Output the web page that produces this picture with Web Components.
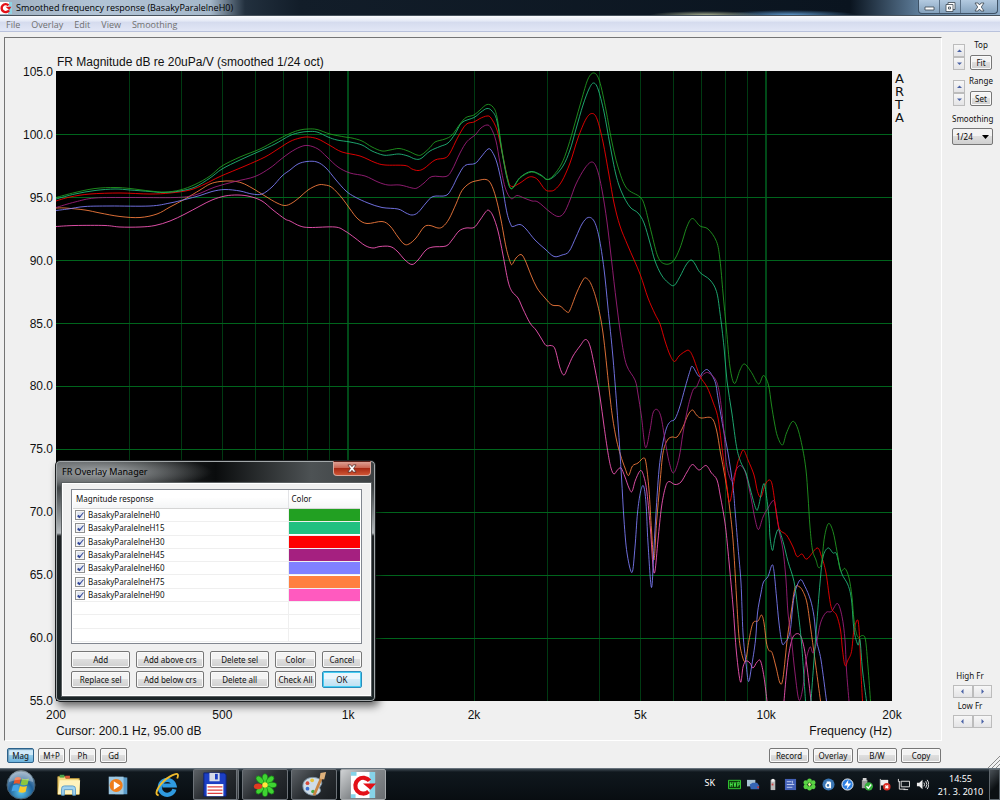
<!DOCTYPE html>
<html lang="en">
<head>
<meta charset="utf-8">
<title>Smoothed frequency response</title>
<style>
    html, body { height: 100%; margin: 0; }
    body {
        display: flex;
        flex-direction: column;
        font: 8px/12px "Noto Sans", "Open Sans", sans-serif;
        color: #111;
        background: #f0f0f0;
    }
    arta-window { flex: 1; min-height: 0; }
</style>
</head>
<body>

<arta-window caption="Smoothed frequency response (BasakyParalelneH0)">
    <fr-chart slot="chart"></fr-chart>
    <side-panel slot="side"></side-panel>
    <push-button slot="modes" pressed>Mag</push-button>
    <push-button slot="modes">M+P</push-button>
    <push-button slot="modes">Ph</push-button>
    <push-button slot="modes">Gd</push-button>
    <push-button slot="actions">Record</push-button>
    <push-button slot="actions">Overlay</push-button>
    <push-button slot="actions">B/W</push-button>
    <push-button slot="actions">Copy</push-button>
</arta-window>
<overlay-manager></overlay-manager>
<task-bar></task-bar>

<script>
// name, colour and curve of every overlay; points are "x,y" in plot units
// (56..892 is 200 Hz..20 kHz on a log scale, 71..701 is 105..55 dB)
const TRACES = [
    { name: 'BasakyParalelneH90', color: '#ff5abf', points: '56,226.5 75,225.5 105,225.5 120,227 140,227 155,225.5 170,221 185,214 200,206 212,200 225,196 238,195 250,196.5 262,201 273,210 285,219 290,221 300,226 310,227.5 335,227 345,231 355,238 365,245.5 373,248 380,246.5 390,246.5 397,251 405,260 412,264.5 418,260 426,250 433,247 446,246 452,240 459,231 466,228 474,227.5 480,220 486,211.5 489,210.5 493,216 498,231 503,255 508,281 512,291.5 518,298 523,309 530,323 536,330 541,338 546,345.5 551,345.5 555,349 560,368 564,375 568,367 573,356 580,346 585.5,339.5 590,346 595,369 600,397 604,426 608,453 611,468 614,474 617.5,470 621,468 625,477 629,488 632,491.5 635.5,480 640.5,470.5 644,477 647,493 650.5,530 653,566 655,571 658,540 661.5,507 665.5,487 669,481.5 675,484.5 681,482 687,472 692.5,464.5 699,470 706,465.5 711.5,473 717,480 720.5,497 725,523 728,551 733,606 736.5,653 740.5,682 743,667 746,661 750,663 753,668 757,662 760.5,661 764,677 767,701 M 784,701 786.5,673 789,653 793,637 799,634 803,643 806.5,663 811,701' },
    { name: 'BasakyParalelneH75', color: '#ff8040', points: '56,208 65,208 85,210 100,213 120,216.5 140,217.5 157,214 170,207 185,199 200,190 210,184 220,181.5 232,181 242,183 252,188 265,196 277,203 285,205.5 292,203 300,197 308,190 318,185 325,185 332,187.5 342,198 350,209 358,219 367,223.5 382,221.5 390,226 398,237 404,244 409,244 416,238 424,227 430,225.5 438,228 443,226.5 449,219 456,204 462,190.5 470,183 478,180.5 486,179.5 491,184 496,198 501,220 506,247 510,261.5 512,264.5 516,258 521,254.5 525,260 531,275 537,288 545,298 552,305 560,306 567,312 570,310 577,292 583,280 586,278 591,284 597,302 603,333 609,388 612.5,417 616.5,440 620.5,455 625,468 628.5,475.5 632.5,466 638,463 643.5,458 646,463 649,490 651.5,530 654,560 656.5,523 660,483 663,453 667.5,440 672,437 677,437 682.5,428 688,415 692.5,410 696.5,415 701,418 711.5,418 716.5,430 720.5,453 725,477 729,503 733,540 736.5,597 739,637 742,655 745.5,661 749,640 753,623 758,621 761.5,615 764,623 766.5,643 769,650.5 772,652.5 776,667 780,683 783,678 787.5,637 791.5,610 795,588 799,586.5 803,591.5 807,603 810.5,627 815,660 820.5,701' },
    { name: 'BasakyParalelneH60', color: '#8080ff', points: '56,210.5 68,209 85,206.5 110,206 150,206 170,203 185,199.5 200,195.5 212,191.5 225,189.5 240,191 252,194 262,194 272,187 282,176 290,170 298,164 307,161.5 317,162 326,168 336,180 346,191 355,197 368,203 382,207.5 398,209 406,213 412,215 418,212.5 426,203 433,196.5 446,195.5 452,188 458,176 465,165.5 475,163.5 481,157 488,149 492,151.5 497,163 502,185 507,213 511,225 513,226.5 520,224.5 526,229 535,240 545,249 554,256.5 562,255 569,251.5 576,237 582,224 588,217.5 594,221 599,237 604,269 608,308 613,358 618,423 621.5,477 624,520 627,553 632,572.5 635,547 637.5,513 640.5,492 643.5,486 646,503 648,543 651.5,587.5 654,547 656,513 659,470 662.5,445 666.5,428 670.5,421.5 675,419 680,406 685,388 690,371 692.5,366.5 699,376.5 703,372 708,370 715,381.5 718,398 723,427 728,453 733,487 735,510 738,547 741,583 743,633 746,663 748.5,681.5 751.5,667 755.5,640 757.5,613 761,593 763.5,582 768,576.5 772,565 774,571.5 776.5,597 779,623 782,643 785,642.5 790,632 794,597 800,580 805,586.5 810.5,600 814,616.5 816.5,640 821,660 826.5,701' },
    { name: 'BasakyParalelneH45', color: '#a52080', points: '56,207.5 75,202 95,198 130,197.5 175,197.5 195,195 215,187 235,181.5 255,176.5 270,168 280,160 290,152.5 300,147 308,145.5 318,149 327,157 338,167 350,173 365,176 378,182 388,185 400,185 412,188 417,188 424,183 432,176.5 446,176.5 452,170 460,153 467,141.5 475,135 481,128 487,125 491,128 496,141 500,163 505,187 511,198.5 517,195.5 524,198 532,201 538,202 550,212 558,216.5 564,213 570,200 576,184 585,168 592,162 597,169 602,190 607,222 611.5,260 616.5,303 621.5,340 626.5,365 635,380 638,394 641.5,417 645.5,447.5 650,430 653,413 657,409.5 661,417 665,440 669,461.5 673.5,473 679,458 683,433 688,407 693,390 696.5,387 701,377 706.5,372.5 711.5,375 716.5,381.5 720,397 724,432 726,460 729,475 732.5,481 736,470 740.5,465.5 745,471.5 748,483 751.5,500 755,519 758.5,529.5 763,517 768,508 773.5,500.5 776,510 779,530 783,550 786,580 788,613 791.5,640 795,673 799,700 803,687 805.5,663 810,647 813,653 816.5,643 820.5,623 826,612.5 831.5,611.5 837.5,603.5 842,616.5 845,640 846.5,670 849,701' },
    { name: 'BasakyParalelneH30', color: '#ff0000', points: '56,201 70,197 90,194 120,193 150,194 170,193 190,190 205,184 220,176.5 245,166 265,157 278,149 290,141.5 300,138 308,137 318,139 330,145.5 342,152 360,156 375,162.5 385,165 405,165.5 412,169 418,170.5 424,168.5 435,160 445,158 450,153 458,137 466,124.5 474,122 480,118.5 487,116 491,118 497,130 502,152 508,180 512,186.5 520,183 528,177.5 533,177 538,180 545,189.5 550,191 555,189.5 562,181 570,163 578,138 586,119 592,113.5 597,119 603,142 609,175 614,203 620,226 628,246 640,274 648,298 655,314 660,324 665,341 670,355 674.5,361.5 679,356 685,351.5 689,350.5 693,357 700,376 707,387 713,402 718,418 722,448 726.5,483 729.5,502 733,487 737,465 740,456.5 743.5,450 748,460 754,475 757.5,491.5 761,497 765,485 769,480 772,484 775,503 777,518 780,530 786.5,535 793,547 797,556.5 802,554 807,559 817,548 821.5,556.5 826,573 831,606.5 836.5,615 840.5,630 842.5,650 845,665.5 848,660 851.5,651.5 854,630 858,620.5 860,647 861,673 862.5,701' },
    { name: 'BasakyParalelneH15', color: '#22c080', points: '56,199 75,194 95,190.5 115,189 130,190 150,191.5 163,192.5 180,191 195,187 210,178 222,169 240,160 260,151 275,144 290,135.5 300,132.5 308,131.5 317,132 328,137 337,140 350,142 362,145 372,151 383,155 390,155 399,154 408,156 415,159 421,158.5 430,151 440,146.5 448,143 455,134 462,122.5 474,117.5 481,112 487,108.5 492,111 497,121 502,152 507,178 511.5,188.5 520,177.5 531,171.5 541,175 547,179.5 554,176.5 563,166 570,150 576,129 583,105 589,89 593.5,83 598,89 604,112 610,145 616,175 622,193 630,207 638,213 644,223 650,243 655,261 661.5,275 668,282.5 674,285.5 680,276.5 686,265 691,260 695,264 700,272.5 710,280 716.5,291.5 720,313 724,347 727,381 732,414 736.5,446.5 740.5,461.5 746,473 750.5,490 756,509 758.5,506.5 763.5,484 766,493 769,518 770,537 772.5,550.5 775,538 778.5,529.5 783,541.5 788,561.5 794,581.5 797.5,607 801.5,643 805.5,701 M 811,701 814,660 816.5,627 820,583 823,557 828,548 833,553 836.5,554 841.5,573 848,585 851.5,600 854,630 858,645 860,640 862.5,670 866.5,701' },
    { name: 'BasakyParalelneH0', color: '#22a022', points: '56,197.5 75,192.5 95,188.5 115,187.5 130,188.5 150,191 165,192 180,190 195,184.5 210,176 222,166 240,157 260,149 275,141 290,133.5 300,130 308,129 317,129.5 330,134 345,137 352,138 362,141 372,147 382,151 390,150 399,148.5 408,151 417,155 422,154.5 430,147.5 435,142 445,139 452,135 460,124 466,117.5 474,115 480,110 487,104.5 493,107 497,117 502,150 507,176 511.5,189 520,178 531.5,172 541.5,176 547,179.5 553,176 561.5,164 568,147 575,123 581.5,100 588,79 594,73 599.5,81 606,110 611.5,140 618,167 626.5,188 640,197 645,207 651.5,233 658,257 665,264 673,261.5 680,248 687,226.5 692.5,218.5 700,226 708,229 716.5,241.5 720,260 723,293 726.5,330 730,367 734.5,383.5 740,370 744.5,364 751.5,372.5 758.5,384 763.5,375.5 768.5,385 771.5,405 774.5,423 777.5,436.5 782.5,445 786.5,433 792.5,421.5 797.5,428 802.5,448 806,470 808,496 810,527 812.5,550 816,560 818.5,567.5 821.5,563 824.5,537 828.5,523.5 833,531.5 837,551.5 840.5,570.5 845,568.5 849,578 852,597 854,620 857.5,636.5 862.5,635.5 865.5,640 868,667 870.5,701' }
];

const PLOT = { left: 56, top: 71, width: 836, height: 630 };

class BaseElement extends HTMLElement {
    constructor() {
        super();
        this.attachShadow({ mode: 'open' });
    }

    connectedCallback() {
        this.render();
    }
}

class PushButton extends BaseElement {
    render() {
        this.shadowRoot.innerHTML = `
        <style>
            :host { display: block; }
            button {
                display: block;
                box-sizing: border-box;
                width: 100%;
                height: var(--button-height, 15px);
                padding: 0;
                border: 1px solid #777;
                border-radius: 2px;
                box-shadow: inset 0 0 0 1px #fafafa;
                background: linear-gradient(#f3f3f3 45%, #dedede 50%, #d0d0d0);
                font: inherit;
                color: inherit;
                white-space: nowrap;
            }
            :host([pressed]) button {
                border-color: #2c628b;
                box-shadow: inset 1px 1px 1px #6f9cb8;
                background: linear-gradient(#d0eafa 45%, #93cbea 50%, #6cb3dd);
            }
            :host([primary]) button {
                border-color: #2a8dbd;
                box-shadow: inset 0 0 0 1px #46cdf2;
                background: linear-gradient(#eaf6fd 45%, #d3ebf8 50%, #bde0f2);
            }
        </style>
        <button type="button"><slot></slot></button>
        `;
    }
}

// pair of arrow buttons, stacked or side by side (dir="row")
class SpinButtons extends BaseElement {
    render() {
        const row = this.getAttribute('dir') === 'row';
        const name = this.getAttribute('name') || '';
        const arrows = row ? ['M5.500 2L3 4.500 5.500 7z', 'M3.500 2L6 4.500 3.500 7z'] : ['M2 6L4.500 3.500 7 6z', 'M2 3.500L4.500 6 7 3.500z'];
        this.shadowRoot.innerHTML = `
        <style>
            :host { display: flex; flex-direction: ${row ? 'row' : 'column'}; }
            button {
                ${row ? 'flex: 1;' : 'flex: none;'}
                display: flex;
                align-items: center;
                justify-content: center;
                box-sizing: border-box;
                min-width: 12px;
                height: 13px;
                padding: 0;
                border: 1px solid #bcbcbc;
                background: linear-gradient(#f7f7f7, #e4e4e6);
            }
            svg { width: 9px; height: 9px; fill: #4a62a6; }
        </style>
        <button type="button" aria-label="${name} ${row ? 'left' : 'up'}"><svg viewBox="0 0 9 9"><path d="${arrows[0]}"/></svg></button>
        <button type="button" aria-label="${name} ${row ? 'right' : 'down'}"><svg viewBox="0 0 9 9"><path d="${arrows[1]}"/></svg></button>
        `;
    }
}

class ArtaWindow extends BaseElement {
    render() {
        const menu = ['File', 'Overlay', 'Edit', 'View', 'Smoothing'];
        this.shadowRoot.innerHTML = `
        <style>
            :host { display: flex; flex-direction: column; }
            header {
                display: flex;
                align-items: center;
                height: 16px;
                box-sizing: border-box;
                border-bottom: 1px solid #47525c;
                background:
                    radial-gradient(ellipse 56px 4px at 706px 15px, #a3ab8c, transparent),
                    radial-gradient(ellipse 66px 5px at 790px 15px, #5d97cb, transparent),
                    linear-gradient(90deg, #9fb0c0 0, #b2c4d6 100px, #a5b8ca 210px, #22303e 245px, #121d29 300px, #0a141f 85%, #5f7e9b 92%, #8eacc8);
            }
            .logo { width: 12px; height: 12px; }
            h1 {
                flex: 1;
                margin: 0 0 0 4px;
                font: 9px/15px "Open Sans", "Noto Sans", sans-serif;
                color: #000;
            }
            .controls {
                display: flex;
                align-self: flex-start;
                margin-right: 2px;
                border: 1px solid #3e5266;
                border-top: 0;
                border-radius: 0 0 4px 4px;
                background: linear-gradient(#b3cae0, #86a3be);
            }
            .controls button {
                display: flex;
                align-items: center;
                justify-content: center;
                width: 21px;
                height: 13px;
                padding: 0;
                border: 0;
                border-right: 1px solid #5a7086;
                background: none;
            }
            .controls button:last-child { width: 36px; border-right: 0; }
            .controls svg { width: 11px; height: 10px; }
            nav {
                display: flex;
                gap: 11px;
                height: 15px;
                padding-left: 6px;
                border-bottom: 1px solid #b9c2dc;
                background: linear-gradient(#fbfcfe, #e3e8f5 35%, #d5dbee 40%, #e2e7f6);
            }
            nav button {
                padding: 0;
                border: 0;
                background: none;
                font: 9px/17px "Open Sans", "Noto Sans", sans-serif;
                color: #707070;
            }
            main { flex: 1; display: flex; min-height: 0; padding: 5px 0 0 4px; }
            .left { flex: 1; display: flex; flex-direction: column; min-width: 0; }
            .frame {
                flex: 1;
                display: flex;
                min-height: 0;
                border: 1px solid;
                border-color: #747474 #fff #fff #747474;
            }
            ::slotted([slot="chart"]) { flex: 1; }
            ::slotted([slot="side"]) { width: 58px; }
            footer {
                display: flex;
                gap: 4px;
                padding: 7px 1px 5px 3px;
            }
            footer .gap { flex: 1; }
            ::slotted([slot="modes"]) { width: 27px; }
            ::slotted([slot="actions"]) { width: 40px; }
        </style>
        <header>
            <svg class="logo" viewBox="0 0 12 12"><path fill="#fff" d="M0 0h12v12H0z"/><path fill="#8ed3e4" d="M9 0h3v12H8z"/><path fill="none" stroke="#e31017" stroke-width="2.400" d="M8.500 3.300A4 4 0 1 0 9 8.300"/><path fill="#e31017" d="M5.500 4.800h6L9.200 8z"/></svg>
            <h1>${this.getAttribute('caption')}</h1>
            <div class="controls">
                <button type="button" aria-label="Minimize"><svg viewBox="0 0 11 10"><path fill="#fff" stroke="#3b4650" stroke-width=".8" d="M1 5h9v3H1z"/></svg></button>
                <button type="button" aria-label="Restore"><svg viewBox="0 0 11 10"><path fill="#fff" stroke="#3b4650" stroke-width=".8" d="M3 .5h7v7H3z"/><path fill="#fff" fill-rule="evenodd" stroke="#3b4650" stroke-width=".8" d="M1 2.500h7v7H1zM3.500 5v2h2V5z"/></svg></button>
                <button type="button" aria-label="Close"><svg viewBox="0 0 11 10"><path fill="#fff" stroke="#3b4650" stroke-width=".8" d="M1 1h3l1.500 2L7 1h3L7.300 5 10 9H7L5.500 7 4 9H1l2.700-4z"/></svg></button>
            </div>
        </header>
        <nav>${menu.map(m => `<button type="button">${m}</button>`).join('')}</nav>
        <main>
            <div class="left">
                <div class="frame"><slot name="chart"></slot></div>
                <footer>
                    <slot name="modes"></slot>
                    <span class="gap"></span>
                    <slot name="actions"></slot>
                </footer>
            </div>
            <slot name="side"></slot>
        </main>
        `;
    }
}

class FrChart extends BaseElement {
    xFor(freq) {
        return PLOT.left + PLOT.width * Math.log10(freq / 200) / 2;
    }

    gridLines() {
        const right = PLOT.left + PLOT.width;
        const bottom = PLOT.top + PLOT.height;
        let out = '';
        for (const decade of [100, 1000, 10000]) {
            for (let i = 1; i < 10; i++) {
                const f = decade * i;
                if (f <= 200 || f >= 20000) continue;
                const x = Math.floor(this.xFor(f)) + (i === 1 ? 0 : 0.5);
                out += `<path class="${i === 1 ? 'decade' : 'minor'}" d="M${x} ${PLOT.top}V${bottom}"/>`;
            }
        }
        for (let db = 100; db > 55; db -= 5) {
            const y = PLOT.top + (105 - db) * 12.6 + 0.5;
            out += `<path class="level" d="M${PLOT.left} ${y}H${right}"/>`;
        }
        return out;
    }

    // Catmull-Rom spline through the points, written as cubic Beziers
    splinePath(str) {
        return str.split(' M ').map(part => {
            const p = part.split(' ').map(s => s.split(',').map(Number));
            let d = `M${p[0]}`;
            for (let i = 0; i < p.length - 1; i++) {
                const a = p[i - 1] || p[i];
                const b = p[i];
                const c = p[i + 1];
                const e = p[i + 2] || c;
                d += `C${b[0] + (c[0] - a[0]) / 6} ${b[1] + (c[1] - a[1]) / 6} ${c[0] - (e[0] - b[0]) / 6} ${c[1] - (e[1] - b[1]) / 6} ${c[0]} ${c[1]}`;
            }
            return d;
        }).join('');
    }

    render() {
        const levels = [];
        for (let db = 105; db >= 55; db -= 5) levels.push(db.toFixed(1));
        const ticks = [['200', 0.398], ['500', 0.301], ['1k', 0.301], ['2k', 0.398], ['5k', 0.301], ['10k', 0.301], ['20k', 0]];
        this.shadowRoot.innerHTML = `
        <style>
            :host {
                display: grid;
                grid-template: 33px minmax(0, 1fr) 21px 18px / 51px minmax(0, 1fr) 49px;
                font: 12px/14px "Liberation Sans", Arial, sans-serif;
                color: #111;
            }
            h2 {
                grid-area: 1 / 2;
                align-self: end;
                margin: 0 0 2px 1px;
                font-size: 12px;
                font-weight: 400;
                line-height: 14px;
            }
            .levels {
                grid-area: 2 / 1;
                display: flex;
                flex-direction: column;
                justify-content: space-between;
                margin: -6px 3px -7px 0;
                text-align: right;
            }
            svg { grid-area: 2 / 2; width: 100%; height: 100%; background: #000; }
            svg path { fill: none; vector-effect: non-scaling-stroke; }
            .minor { stroke: #003a12; }
            .decade { stroke: #004a18; stroke-width: 2; }
            .level { stroke: #00641c; }
            .brand {
                grid-area: 2 / 3;
                width: 10px;
                margin: 1px 0 0 3px;
                font: 13px/13px "DejaVu Sans", sans-serif;
                word-break: break-all;
            }
            .ticks { grid-area: 3 / 2; display: flex; align-items: center; margin-top: 6px; }
            .ticks span { width: 0; display: flex; justify-content: center; }
            .ticks i { height: 1px; flex-basis: 0; }
            .foot {
                grid-area: 4 / 2;
                display: flex;
                justify-content: space-between;
                padding-top: 2px;
            }
        </style>
        <h2>FR Magnitude dB re 20uPa/V (smoothed 1/24 oct)</h2>
        <div class="levels">${levels.map(l => `<span>${l}</span>`).join('')}</div>
        <svg viewBox="${PLOT.left} ${PLOT.top} ${PLOT.width} ${PLOT.height}" preserveAspectRatio="none" role="img" aria-label="Frequency response">
            ${this.gridLines()}
            ${TRACES.map(t => `<path stroke="${t.color}" stroke-opacity=".85" d="${this.splinePath(t.points)}"/>`).join('')}
        </svg>
        <div class="brand">ARTA</div>
        <div class="ticks">${ticks.map(([t, w]) => `<span>${t}</span>${w ? `<i style="flex-grow:${w * 1000}"></i>` : ''}`).join('')}</div>
        <div class="foot"><span>Cursor: 200.1 Hz, 95.00 dB</span><span>Frequency (Hz)</span></div>
        `;
    }
}

class SidePanel extends BaseElement {
    render() {
        this.shadowRoot.innerHTML = `
        <style>
            :host {
                display: flex;
                flex-direction: column;
                box-sizing: border-box;
                padding-top: 7px;
                font-size: 8px;
                line-height: 12px;
            }
            .set {
                display: grid;
                grid-template-columns: 12px 22px;
                align-items: start;
                column-gap: 5px;
                margin: 0 0 10px 11px;
            }
            .set div { display: flex; flex-direction: column; align-items: center; gap: 4px; margin-top: -5px; }
            .set span { white-space: nowrap; }
            .set push-button { width: 22px; }
            .smooth { display: flex; flex-direction: column; gap: 3px; margin: -3px 0 0 10px; }
            .pick { display: grid; width: 41px; }
            .pick > * { grid-area: 1 / 1; }
            .pick svg { width: 7px; height: 4px; place-self: center end; margin-right: 4px; pointer-events: none; }
            select {
                appearance: none;
                box-sizing: border-box;
                height: 17px;
                padding: 0 0 0 3px;
                border: 1px solid #777;
                border-radius: 2px;
                background: linear-gradient(#f3f3f3 45%, #dedede 50%, #d0d0d0);
                font: inherit;
                color: #000;
            }
            .space { flex: 1; }
            .freq { display: flex; flex-direction: column; gap: 3px; margin: 0 8px 2px 11px; text-align: center; }
            .freq span { margin-right: 5px; }
            .grip { align-self: flex-end; width: 12px; height: 12px; margin-top: 26px; }
        </style>
        <div class="set"><spin-buttons name="Top"></spin-buttons><div><span>Top</span><push-button>Fit</push-button></div></div>
        <div class="set"><spin-buttons name="Range"></spin-buttons><div><span>Range</span><push-button>Set</push-button></div></div>
        <div class="smooth">
            <label for="oct">Smoothing</label>
            <div class="pick">
                <select id="oct"><option>1/24</option></select>
                <svg viewBox="0 0 7 4"><path d="M0 0h7L3.500 4z"/></svg>
            </div>
        </div>
        <span class="space"></span>
        <div class="freq"><span>High Fr</span><spin-buttons dir="row" name="High Fr"></spin-buttons></div>
        <div class="freq"><span>Low Fr</span><spin-buttons dir="row" name="Low Fr"></spin-buttons></div>
        <svg class="grip" viewBox="0 0 12 12"><path stroke="#8a8a8a" d="M0 12L12 0M4 12l8-8M8 12l4-4"/></svg>
        `;
    }
}

class OverlayManager extends BaseElement {
    render() {
        const rows = [...TRACES].reverse().map((t, i) => `
            <tr>
                <td><label><input type="checkbox" id="t${i}" checked>${t.name}</label></td>
                <td><b style="background:${t.color}"></b></td>
            </tr>`).join('');
        this.shadowRoot.innerHTML = `
        <style>
            :host {
                position: absolute;
                left: 55px;
                top: 460px;
                box-sizing: border-box;
                width: 321px;
                padding: 0 4px 5px 6px;
                border: 1px solid #1b1e20;
                border-radius: 5px;
                box-shadow: inset 0 0 0 1px #a3a8aa, 3px 4px 8px rgba(0, 0, 0, .6);
                background:
                    radial-gradient(ellipse 110px 18px at 46px 11px, #a0a4a6, transparent),
                    linear-gradient(transparent 20px, #3c4143 26px, #b5babd 72px, #1d2123 75px, #1c2527),
                    linear-gradient(90deg, #55595b, #0a0c0d 50%, #4d5254 80%, #3c4042);
            }
            header { display: flex; justify-content: space-between; align-items: center; height: 22px; }
            h2 { margin: 0; font-size: 9px; font-weight: 400; line-height: 20px; color: #000; }
            .close {
                display: flex;
                align-items: center;
                justify-content: center;
                align-self: flex-start;
                width: 38px;
                height: 15px;
                padding: 0;
                border: 1px solid #d8a79c;
                border-top-color: #5b2018;
                border-radius: 0 0 4px 4px;
                background: linear-gradient(#dda094, #c96552 45%, #a82a15 50%, #cf5534);
            }
            .close svg { width: 10px; height: 9px; }
            .body {
                padding: 5px 8px 7px;
                border: 1px solid #fff;
                outline: 1px solid #5b6062;
                background: #f0f0f0;
            }
            .list { border: 1px solid #828790; padding: 0 1px 1px; background: #fff; }
            table { width: 100%; height: 152px; border-collapse: collapse; table-layout: fixed; }
            th {
                height: 18px;
                padding: 0 3px;
                border-right: 1px solid #e2e3e6;
                border-bottom: 1px solid #d5d5d5;
                background: linear-gradient(#fff 40%, #f4f5f6);
                font-weight: 400;
                text-align: left;
            }
            th:last-child, td:last-child { width: 72px; box-sizing: border-box; border-right: 0; }
            td {
                height: 12px;
                padding: 0;
                border-right: 1px solid #efefef;
                border-bottom: 1px solid #efefef;
                line-height: 12px;
            }
            td b { display: block; height: 12px; }
            label { display: flex; align-items: center; gap: 3px; padding-left: 2px; }
            input {
                appearance: none;
                display: flex;
                justify-content: center;
                box-sizing: border-box;
                width: 10px;
                height: 10px;
                margin: 0;
                border: 1px solid #8e8f8f;
                background: #e2e7f0;
                box-shadow: inset 0 0 0 1px #f6f6f6;
            }
            input:checked::after {
                content: "";
                width: 2px;
                height: 5px;
                border: solid #33489a;
                border-width: 0 1px 2px 0;
                transform: rotate(40deg);
            }
            .buttons {
                --button-height: 17px;
                display: grid;
                grid-template-columns: 59fr 67fr 59fr 40fr 40fr;
                gap: 3px 6px;
                margin-top: 7px;
            }
        </style>
        <header>
            <h2>FR Overlay Manager</h2>
            <button class="close" type="button" aria-label="Close"><svg viewBox="0 0 11 10"><path fill="#fff" stroke="#4b2a28" stroke-width=".8" d="M1 1h3l1.500 2L7 1h3L7.300 5 10 9H7L5.500 7 4 9H1l2.700-4z"/></svg></button>
        </header>
        <div class="body">
            <div class="list">
                <table>
                    <thead><tr><th>Magnitude response</th><th>Color</th></tr></thead>
                    <tbody>${rows}${'<tr><td></td><td></td></tr>'.repeat(3)}</tbody>
                </table>
            </div>
            <div class="buttons">
                <push-button>Add</push-button>
                <push-button>Add above crs</push-button>
                <push-button>Delete sel</push-button>
                <push-button>Color</push-button>
                <push-button>Cancel</push-button>
                <push-button>Replace sel</push-button>
                <push-button>Add below crs</push-button>
                <push-button>Delete all</push-button>
                <push-button>Check All</push-button>
                <push-button primary>OK</push-button>
            </div>
        </div>
        `;
    }
}

const APP_ICONS = {
    explorer: '<path fill="#f3d980" stroke="#b89538" d="M2 5h8l1 2h14v17H2z"/><path fill="#4aa04a" d="M4 3h5v3H4z"/><path fill="#d85a3a" d="M10 4h5v3h-5z"/><path fill="#fff3bd" d="M4 9h22l-1 15H2z"/><path fill="#9fd2ef" stroke="#5a9cc8" d="M6 25v-7q0-3 3-3h9q3 0 3 3v7h-3v-6H9v6z"/>',
    player: '<path fill="#5b9bc8" d="M11 5l13 1v18H11z"/><path fill="#9cc7e2" d="M4 5h16v19H4z"/><circle cx="12" cy="14.500" r="7" fill="#ef7d1a"/><path fill="#fff" d="M9.500 10l7 4.500-7 4.500z"/>',
    ie: '<path fill="none" stroke="#2f9ae0" stroke-width="4.500" d="M22 18.500A8 8 0 1 1 22 14.500H9"/><path fill="none" stroke="#f0bb2c" stroke-width="2" d="M5 25C-2 24 8 10 17 5s10-3 8 2"/>',
    floppy: '<path fill="#1c3fc4" stroke="#0c2070" d="M2 1h22l2 2v23H2z"/><path fill="#d5dbe8" d="M8 1h11v9H8z"/><path fill="#1c3fc4" d="M14 2h3v6h-3z"/><path fill="#fff" d="M5 13h18v13H5z"/><path stroke="#e04040" stroke-width="1.500" d="M6 16h16M6 19.500h16M6 23h16"/>',
    icq: '<g fill="#3fd432" stroke="#147c14" stroke-width=".7"><ellipse cx="14" cy="7" rx="3" ry="5"/><ellipse cx="19.500" cy="8.500" rx="3" ry="5" transform="rotate(45 19.500 8.500)"/><ellipse cx="21.500" cy="14" rx="5" ry="3"/><ellipse cx="19.500" cy="19.500" rx="3" ry="5" transform="rotate(-45 19.500 19.500)"/><ellipse cx="14" cy="21.500" rx="3" ry="5"/><ellipse cx="8.500" cy="8.500" rx="3" ry="5" transform="rotate(-45 8.500 8.500)"/><ellipse cx="8.500" cy="19.500" rx="3" ry="5" transform="rotate(45 8.500 19.500)"/></g><ellipse cx="6.500" cy="15.500" rx="4.500" ry="3" fill="#e23b20"/><circle cx="14" cy="14" r="3" fill="#ffe83c"/>',
    paint: '<path fill="#cfdde8" stroke="#7c93a5" d="M2 15C2 8 9 5 15 6c7 1 9 6 6 9-2 2 0 3 0 5-1 5-8 6-13 4-4-2-6-5-6-9z"/><circle cx="7" cy="12" r="2" fill="#d84a3a"/><circle cx="12" cy="9" r="2" fill="#e8c23a"/><circle cx="7" cy="18" r="2" fill="#3c6fd0"/><circle cx="13" cy="21" r="2" fill="#46a846"/><path stroke="#c98542" stroke-width="3" d="M23 4l-9 21"/><path fill="#dfb27c" d="M21 1l6-1-2 8-5-1z"/>',
    arta: '<path fill="#fff" d="M1 0h26v28H1z"/><path fill="#86d3e8" d="M21 0h6v28h-6zM1 0h6v4H1zM1 24h5v4H1z"/><path fill="none" stroke="#e31017" stroke-width="4.500" d="M21 9.500A8.500 8.500 0 1 0 20 21"/><path fill="#e31017" d="M14 12.500h14l-6 6.500z"/>'
};

const TRAY_ICONS = [
    '<path fill="#0b3d0b" stroke="#35d435" d="M.5 2.500h13v9H.5z"/><path fill="none" stroke="#4cf04c" d="M2.500 4.500v5M4.500 4.500v5M2.500 7h2M6.500 4.500l1 5 1-5M10.500 9.500v-5h1.500v3h-1.500"/>',
    '<path fill="#a9c2d4" d="M0 2h9v7H0z"/><path fill="#3565b4" d="M3 7l3-2h5l2 3v4H4z"/><path fill="#c23b3b" d="M11 9h2v2h-2z"/>',
    '<path fill="#b9b9b9" d="M5 2h5v11H5z"/><path fill="#f0f0f0" d="M6 1h3v3H6z"/><path fill="#c44" d="M6 6h2v2H6z"/>',
    '<path fill="#4461b8" d="M1 1h12v12H1z"/><path stroke="#c6d2f2" d="M3 4h5M3 7h8M3 10h6M9 3v3"/>',
    '<g fill="#59d443"><circle cx="7" cy="3" r="2.500"/><circle cx="11" cy="5" r="2.500"/><circle cx="11" cy="9.500" r="2.500"/><circle cx="7" cy="11" r="2.500"/><circle cx="3" cy="9.500" r="2.500"/><circle cx="3" cy="5" r="2.500"/></g><circle cx="7" cy="7" r="1.500" fill="#e8ff9c"/>',
    '<circle cx="7" cy="7" r="6.500" fill="#3a76b4"/><circle cx="6.500" cy="8" r="2.200" fill="none" stroke="#fff" stroke-width="1.500"/><path stroke="#fff" stroke-width="1.500" d="M9 4.500v6.500M5 4.500h4"/>',
    '<circle cx="7" cy="7" r="6" fill="#2d7fe0" stroke="#fff"/><path fill="#fff" d="M8 2L3.500 8H7l-1 4 5-6H7.500z"/>',
    '<path fill="#9b9b9b" d="M2 2h6v9H2z"/><path fill="#d6d6d6" d="M3 0h4v3H3z"/><circle cx="9.500" cy="9" r="4.500" fill="#35b03b"/><path fill="none" stroke="#fff" stroke-width="1.500" d="M7 9l2 2 3-4"/>',
    '<path fill="none" stroke="#ddd" d="M2.500 1v12"/><path fill="#eee" d="M3 2h8v6H3z"/><circle cx="9.500" cy="9.500" r="4" fill="#dc2f25"/><path stroke="#fff" stroke-width="1.500" d="M8 8l3 3M11 8l-3 3"/>',
    '<path fill="#11181d" stroke="#e8e8e8" d="M4.500 3.500h9v6h-9z"/><path fill="none" stroke="#e8e8e8" d="M1.500 1v3h2M2.500 4v8H9M7 12.500h5"/>',
    '<path fill="#eee" d="M1 5h2.500L7 2v10L3.500 9H1z"/><path fill="none" stroke="#eee" d="M8.500 5q1.500 2 0 4M10.500 3.500q2.500 3.500 0 7M12 2q3.500 5 0 10"/>'
];

class TaskBar extends BaseElement {
    app(name, label, state = '') {
        return `<button type="button" class="${state}" aria-label="${label}"><svg viewBox="0 0 28 28">${APP_ICONS[name]}</svg></button>`;
    }

    render() {
        this.shadowRoot.innerHTML = `
        <style>
            :host {
                display: flex;
                align-items: stretch;
                height: 31px;
                border-top: 1px solid #66727c;
                background: linear-gradient(#3d4851, #10181e 3px, #080d11);
                color: #fff;
            }
            button { display: flex; align-items: center; justify-content: center; padding: 0; border: 0; background: none; }
            .start { width: 42px; }
            .start svg { width: 30px; height: 30px; }
            .apps { display: flex; gap: 3px; padding-left: 4px; }
            .apps button { box-sizing: border-box; width: 46px; }
            .apps svg { width: 26px; height: 26px; }
            .apps .run {
                border: 1px solid #6c7278;
                border-radius: 2px;
                background: linear-gradient(135deg, #5c6166, #292d31 50%, #181c20);
            }
            .apps .stack { border-right: 3px double #6c7278; }
            .apps .active { background: linear-gradient(135deg, #d0d2d4, #84888b 50%, #6a6e72); border-color: #a5a9ac; }
            .space { flex: 1; }
            .lang { font-size: 9px; line-height: 28px; margin-right: 10px; }
            .tray { display: grid; grid-template-columns: repeat(11, 1fr); width: 207px; place-items: center; }
            .tray svg { width: 13px; height: 13px; }
            time {
                display: flex;
                flex-direction: column;
                justify-content: center;
                width: 57px;
                font-size: 9px;
                line-height: 13px;
                text-align: center;
                white-space: nowrap;
            }
            .desk { width: 11px; border: 1px solid #5d656b; background: linear-gradient(135deg, #4a5157, #0c1013 60%); }
        </style>
        <button class="start" type="button" aria-label="Start">
            <svg viewBox="0 0 30 30">
                <defs><radialGradient id="orb" cx=".5" cy=".75" r=".7"><stop offset="0" stop-color="#5cc8f0"/><stop offset=".6" stop-color="#1f5f97"/><stop offset="1" stop-color="#7d9ab4"/></radialGradient></defs>
                <circle cx="15" cy="15" r="14" fill="url(#orb)" stroke="#47606f"/>
                <path fill="#e9582a" d="M9 8q3-2 6 0l-1.500 6q-3-1.500-6 0z"/>
                <path fill="#8cc63f" d="M16 8.500q3 1.500 7 0L21.500 14.500q-3 1.500-7 0z"/>
                <path fill="#45a3e6" d="M7 15.500q3-1.500 6 0l-1.500 6q-3-1.500-6 0z"/>
                <path fill="#fbc92b" d="M14 16q3 1.500 7 0L19.500 22q-3 1.500-7 0z"/>
                <path fill="#fff" opacity=".3" d="M3 12a12 12 0 0 1 24 0q-12-5-24 0z"/>
            </svg>
        </button>
        <div class="apps">
            ${this.app('explorer', 'Explorer')}
            ${this.app('player', 'Media Player')}
            ${this.app('ie', 'Internet Explorer')}
            ${this.app('floppy', 'Commander', 'run stack')}
            ${this.app('icq', 'ICQ', 'run')}
            ${this.app('paint', 'Paint', 'run')}
            ${this.app('arta', 'ARTA', 'run active')}
        </div>
        <span class="space"></span>
        <span class="lang">SK</span>
        <div class="tray">${TRAY_ICONS.map(i => `<svg viewBox="0 0 14 14">${i}</svg>`).join('')}</div>
        <time datetime="2010-03-21T14:55"><span>14:55</span><span>21. 3. 2010</span></time>
        <button class="desk" type="button" aria-label="Show desktop"></button>
        `;
    }
}

customElements.define('push-button', PushButton);
customElements.define('spin-buttons', SpinButtons);
customElements.define('fr-chart', FrChart);
customElements.define('side-panel', SidePanel);
customElements.define('arta-window', ArtaWindow);
customElements.define('overlay-manager', OverlayManager);
customElements.define('task-bar', TaskBar);
</script>
</body>
</html>
